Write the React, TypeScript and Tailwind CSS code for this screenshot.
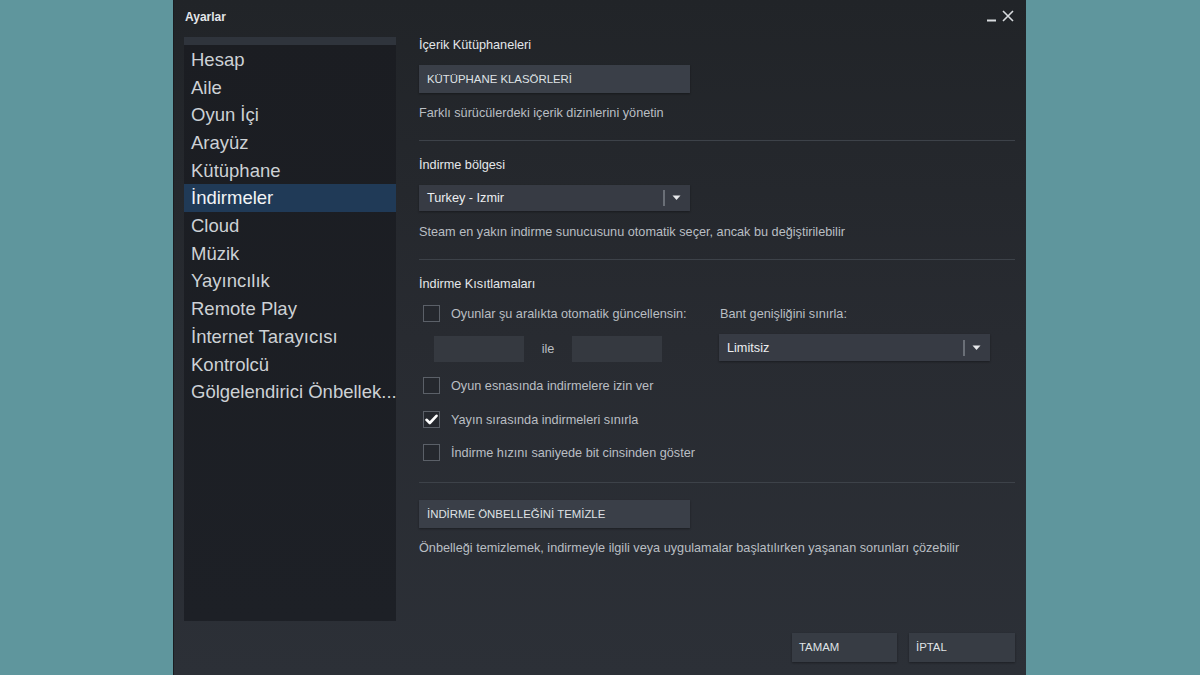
import React from "react";

const font = { fontFamily: '"Liberation Sans", Arial, sans-serif' };

const navItems = [
  "Hesap",
  "Aile",
  "Oyun İçi",
  "Arayüz",
  "Kütüphane",
  "İndirmeler",
  "Cloud",
  "Müzik",
  "Yayıncılık",
  "Remote Play",
  "İnternet Tarayıcısı",
  "Kontrolcü",
  "Gölgelendirici Önbellek...",
];

function Checkbox({ checked }: { checked?: boolean }) {
  return (
    <div className="w-[17px] h-[17px] border border-[#5b6068] bg-[#25282e] flex items-center justify-center shrink-0">
      {checked && (
        <svg width="13" height="11" viewBox="0 0 13 11">
          <path d="M1.5 5.8 L4.8 9 L11.5 1.8" stroke="#ffffff" strokeWidth="2.6" fill="none" strokeLinecap="round" strokeLinejoin="round" />
        </svg>
      )}
    </div>
  );
}

function Dropdown({ value, h }: { value: string; h: string }) {
  return (
    <div className={`w-[271px] ${h} bg-[#373b44] flex items-center pl-[8px] pr-[9px] shadow-[0_1px_2px_rgba(0,0,0,0.35)]`}>
      <span className="flex-1 text-[12.7px] text-[#eceef0]">{value}</span>
      <div className="w-[2px] h-[16px] bg-[#6a6f77]" />
      <svg width="9" height="6" viewBox="0 0 9 6" className="ml-[7px]">
        <path d="M0.5 0.5 H8.5 L4.5 5 Z" fill="#e6e8ea" />
      </svg>
    </div>
  );
}

function Button({ label, w }: { label: string; w: string }) {
  return (
    <div className={`${w} h-[28px] bg-[#3a3f48] flex items-center pl-[8px] text-[11.4px] text-[#dfe2e5] shadow-[0_1px_2px_rgba(0,0,0,0.35)]`}>
      {label}
    </div>
  );
}

function Divider({ mt }: { mt: string }) {
  return <div className={`${mt} w-[596px] h-[1px] bg-[#3d4249]`} />;
}

export default function App() {
  return (
    <div className="w-[1200px] h-[675px] bg-[#5f969d] flex overflow-hidden" style={font}>
      <div className="ml-[173px] w-[853px] h-[675px] flex flex-col border-l border-[#1a1d21] bg-linear-to-b from-[#212428] via-[#282b31] to-[#2c3037]">
        {/* Title bar */}
        <div className="h-[37px] flex items-center pl-[11px] pr-[12px] shrink-0">
          <span className="text-[12px] font-bold text-[#e3e6e9] -mt-[3px]">Ayarlar</span>
          <div className="flex-1" />
          <div className="flex items-end gap-[6px] -mt-[6px]">
            <svg width="9" height="12" viewBox="0 0 9 12">
              <rect x="0" y="9.5" width="9" height="2" fill="#d8dbde" />
            </svg>
            <svg width="12" height="12" viewBox="0 0 12 12">
              <path d="M1 1 L11 11 M11 1 L1 11" stroke="#d8dbde" strokeWidth="1.6" />
            </svg>
          </div>
        </div>

        {/* Body */}
        <div className="flex pl-[10px] h-[584px] shrink-0">
          {/* Sidebar */}
          <div className="w-[212px] h-[584px] flex flex-col bg-linear-to-b from-[#1b1d22] to-[#1d2026]">
            <div className="h-[8px] bg-[#2f343c] shrink-0" />
            <div className="pt-[1px] flex flex-col">
              {navItems.map((item) => (
                <div
                  key={item}
                  className={`h-[27.7px] flex items-center pl-[7px] text-[18.5px] whitespace-nowrap ${
                    item === "İndirmeler" ? "bg-[#203a57] text-[#f2f4f6]" : "text-[#cdd1d5]"
                  }`}
                >
                  {item}
                </div>
              ))}
            </div>
          </div>

          {/* Content */}
          <div className="flex-1 pl-[23px] flex flex-col text-[12.7px] leading-[16px]">
            <div className="text-[#e4e7ea]">İçerik Kütüphaneleri</div>
            <div className="mt-[12px]">
              <Button label="KÜTÜPHANE KLASÖRLERİ" w="w-[271px]" />
            </div>
            <div className="mt-[12px] text-[#b9bec3]">Farklı sürücülerdeki içerik dizinlerini yönetin</div>

            <Divider mt="mt-[19px]" />

            <div className="mt-[16px] text-[#e4e7ea]">İndirme bölgesi</div>
            <div className="mt-[12px]">
              <Dropdown value="Turkey - Izmir" h="h-[26px]" />
            </div>
            <div className="mt-[13px] text-[#b9bec3]">
              Steam en yakın indirme sunucusunu otomatik seçer, ancak bu değiştirilebilir
            </div>

            <Divider mt="mt-[19px]" />

            <div className="mt-[16px] text-[#e4e7ea]">İndirme Kısıtlamaları</div>

            <div className="mt-[13px] flex">
              <div className="w-[300px] flex flex-col">
                <div className="flex items-center h-[17px] pl-[4px]">
                  <Checkbox />
                  <span className="ml-[11px] text-[#b9bec3]">Oyunlar şu aralıkta otomatik güncellensin:</span>
                </div>
                <div className="mt-[14px] flex items-center pl-[15px]">
                  <div className="w-[90px] h-[26px] bg-[#353940]" />
                  <span className="w-[48px] text-center text-[#b9bec3]">ile</span>
                  <div className="w-[90px] h-[26px] bg-[#353940]" />
                </div>
              </div>
              <div className="flex flex-col">
                <div className="h-[17px] flex items-center pl-[1px] text-[#b9bec3]">Bant genişliğini sınırla:</div>
                <div className="mt-[12px]">
                  <Dropdown value="Limitsiz" h="h-[27px]" />
                </div>
              </div>
            </div>

            <div className="mt-[15px] flex items-center h-[17px] pl-[4px]">
              <Checkbox />
              <span className="ml-[11px] text-[#b9bec3]">Oyun esnasında indirmelere izin ver</span>
            </div>
            <div className="mt-[17px] flex items-center h-[17px] pl-[4px]">
              <Checkbox checked />
              <span className="ml-[11px] text-[#b9bec3]">Yayın sırasında indirmeleri sınırla</span>
            </div>
            <div className="mt-[16px] flex items-center h-[17px] pl-[4px]">
              <Checkbox />
              <span className="ml-[11px] text-[#b9bec3]">İndirme hızını saniyede bit cinsinden göster</span>
            </div>

            <Divider mt="mt-[21px]" />

            <div className="mt-[17px]">
              <Button label="İNDİRME ÖNBELLEĞİNİ TEMİZLE" w="w-[271px]" />
            </div>
            <div className="mt-[12px] text-[#b9bec3]">
              Önbelleği temizlemek, indirmeyle ilgili veya uygulamalar başlatılırken yaşanan sorunları çözebilir
            </div>
          </div>
        </div>

        {/* Footer */}
        <div className="flex-1 flex justify-end items-start pt-[12px] pr-[11px] gap-[12px]">
          <div className="w-[105px] h-[29px] bg-[#373c44] flex items-center pl-[7px] text-[11.4px] text-[#dfe2e5] shadow-[0_1px_2px_rgba(0,0,0,0.35)]">
            TAMAM
          </div>
          <div className="w-[106px] h-[29px] bg-[#373c44] flex items-center pl-[7px] text-[11.4px] text-[#dfe2e5] shadow-[0_1px_2px_rgba(0,0,0,0.35)]">
            İPTAL
          </div>
        </div>
      </div>
    </div>
  );
}
